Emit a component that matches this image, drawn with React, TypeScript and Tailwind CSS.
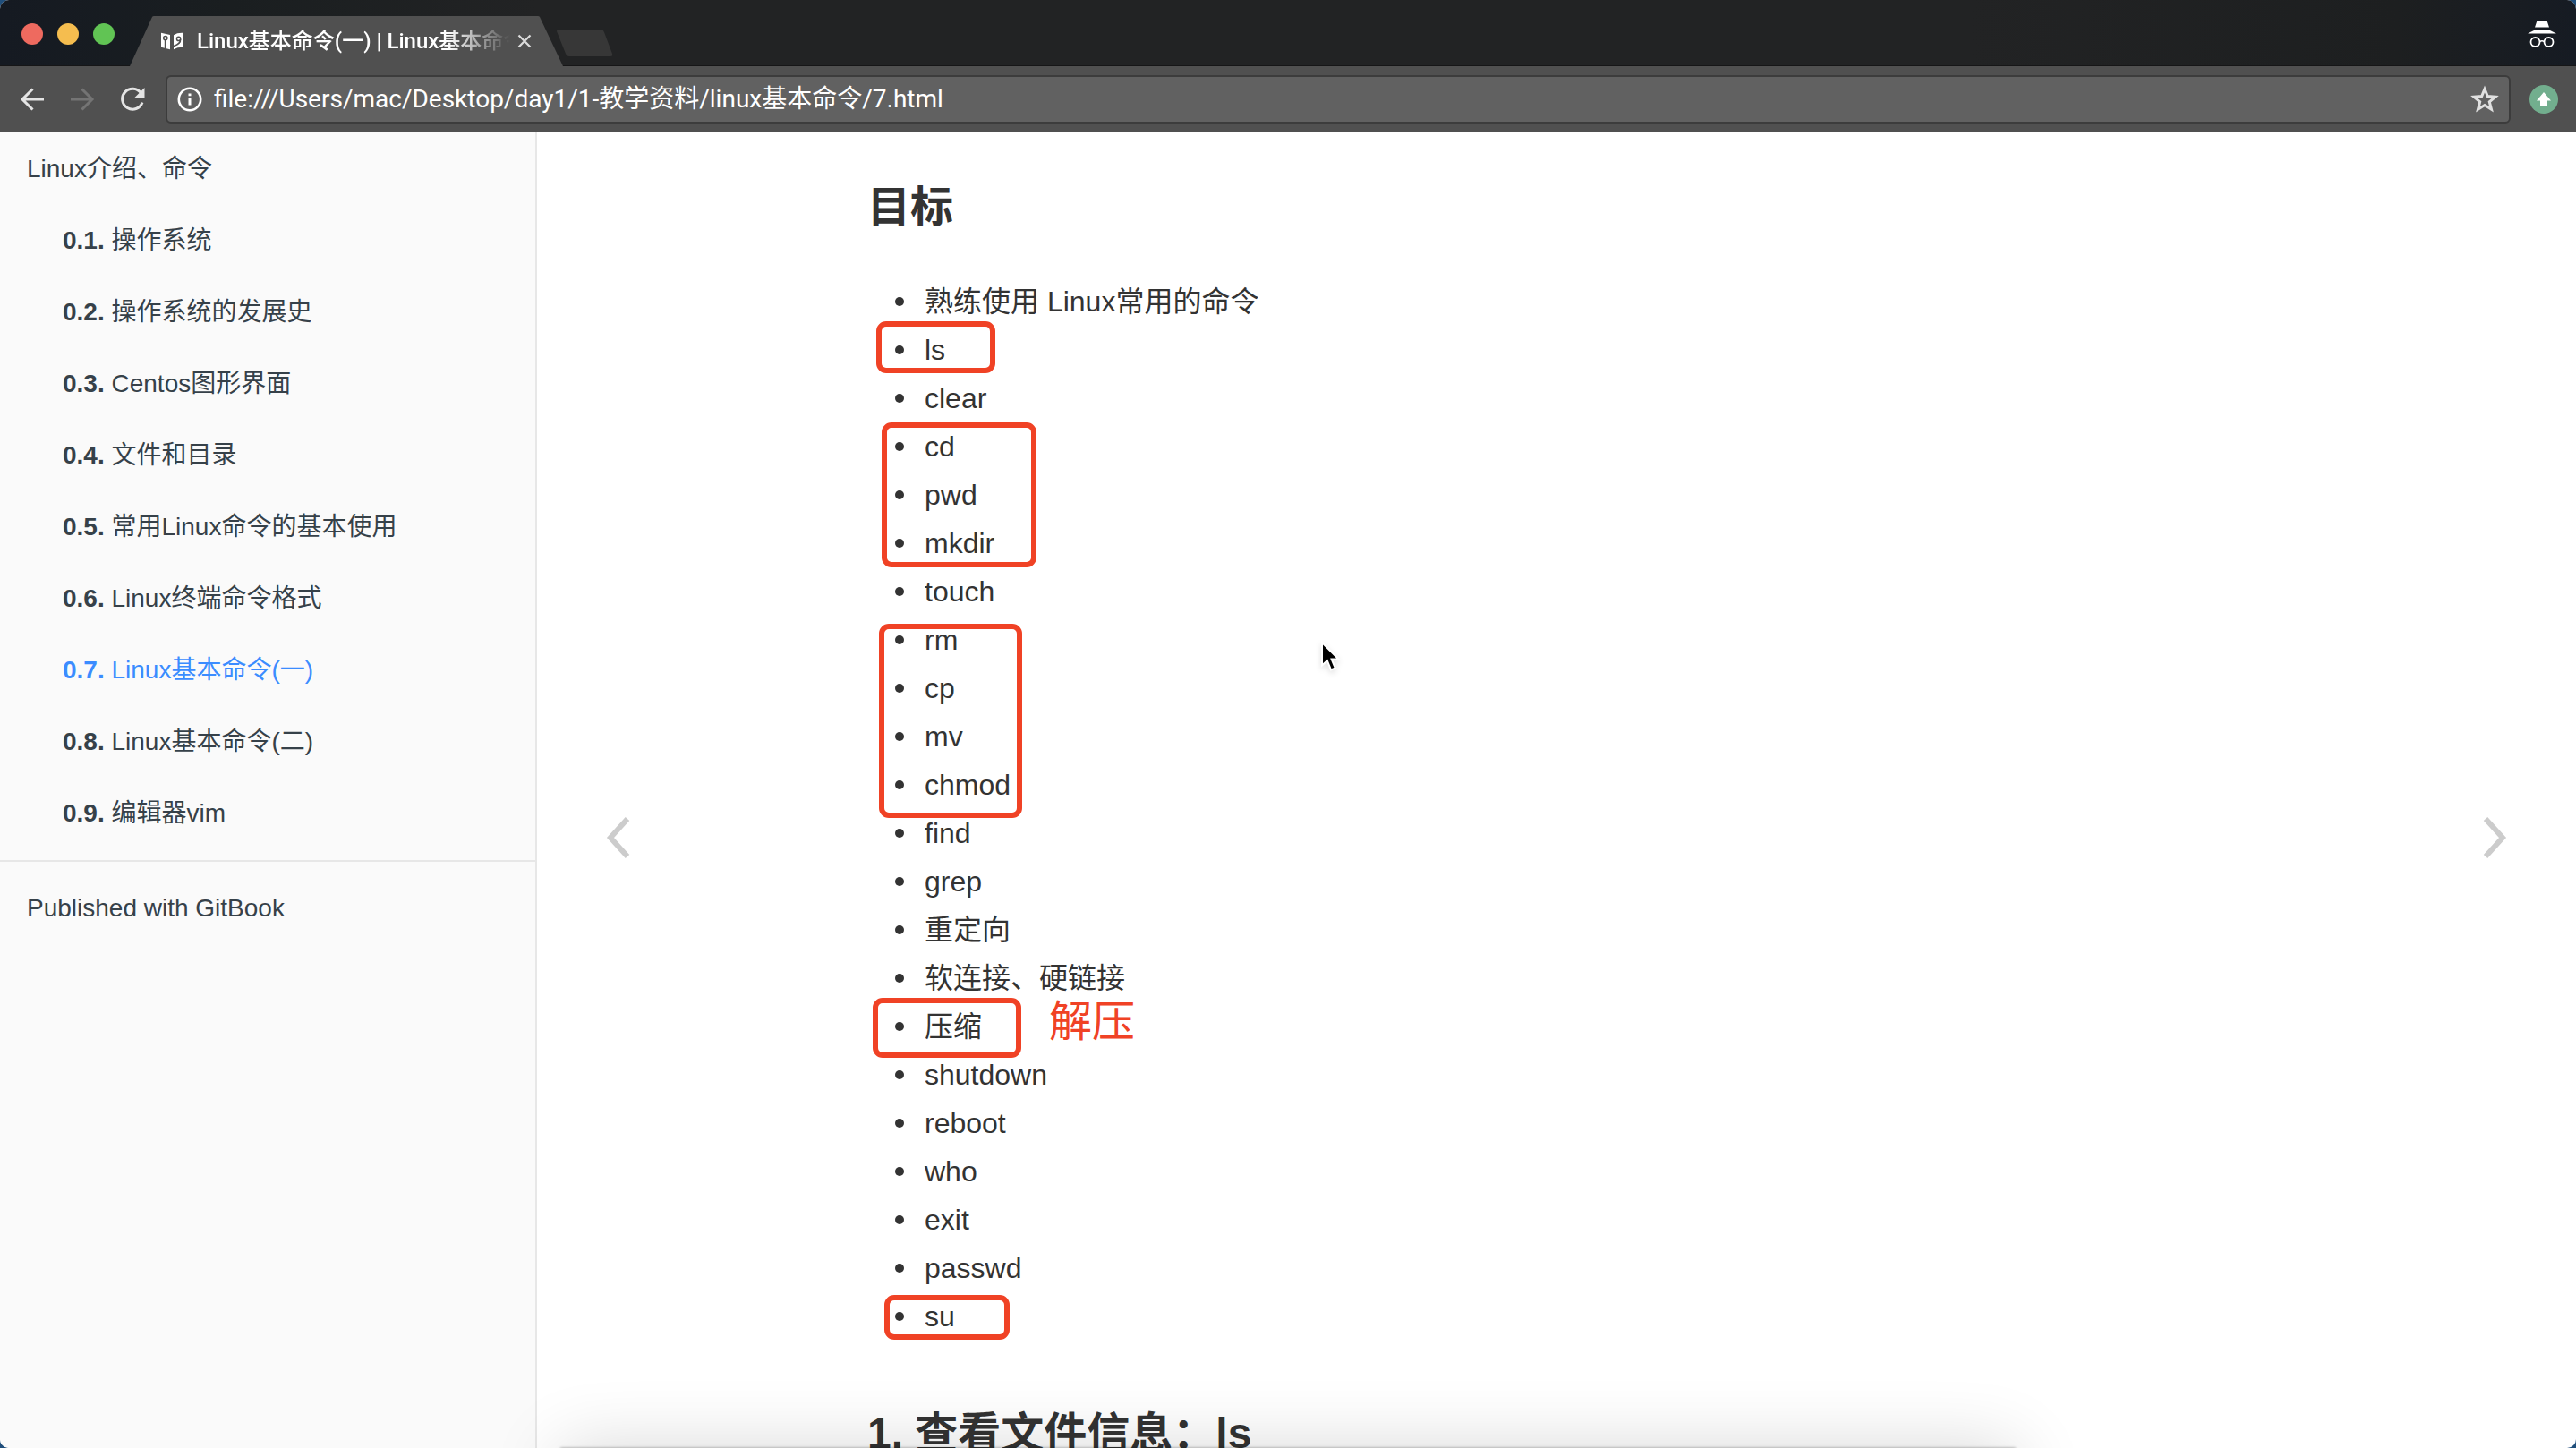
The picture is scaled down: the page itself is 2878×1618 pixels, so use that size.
import React from "react";

const chapters = [
  { number: "0.1.", title: "操作系统" },
  { number: "0.2.", title: "操作系统的发展史" },
  { number: "0.3.", title: "Centos图形界面" },
  { number: "0.4.", title: "文件和目录" },
  { number: "0.5.", title: "常用Linux命令的基本使用" },
  { number: "0.6.", title: "Linux终端命令格式" },
  { number: "0.7.", title: "Linux基本命令(一)", active: true },
  { number: "0.8.", title: "Linux基本命令(二)" },
  { number: "0.9.", title: "编辑器vim" },
];

type Goal = { text: string; box?: string; note?: string };

const goals: Goal[] = [
  { text: "熟练使用 Linux常用的命令" },
  { text: "ls", box: "-left-[54px] -top-[5px] w-[133px] h-[58px]" },
  { text: "clear" },
  { text: "cd", box: "-left-12 top-0 w-[173px] h-[162px]" },
  { text: "pwd" },
  { text: "mkdir" },
  { text: "touch" },
  { text: "rm", box: "-left-[51px] top-[9px] w-[160px] h-[217px]" },
  { text: "cp" },
  { text: "mv" },
  { text: "chmod" },
  { text: "find" },
  { text: "grep" },
  { text: "重定向" },
  { text: "软连接、硬链接" },
  { text: "压缩", box: "-left-[58px] -top-[5px] w-[166px] h-[67px]", note: "解压" },
  { text: "shutdown" },
  { text: "reboot" },
  { text: "who" },
  { text: "exit" },
  { text: "passwd" },
  { text: "su", box: "-left-[45px] top-[3px] w-[140px] h-[50px]" },
];

function BookIcon() {
  return (
    <svg className="h-5 w-[26px] shrink-0" viewBox="0 0 26 20" fill="none" aria-hidden="true">
      <path d="M1 0.8 L11 3 V19.2 L1 16.8 Z" fill="white" />
      <path d="M25 0.8 Q19 0.6 15 3.2 V19.2 Q19 16.8 25 16.8 Z" fill="white" />
      <circle cx="5.8" cy="6.6" r="2.1" stroke="#505050" strokeWidth="1.5" />
      <path d="M5.8 9 V18.6" stroke="#505050" strokeWidth="2" />
      <circle cx="20.6" cy="7.4" r="2.1" stroke="#505050" strokeWidth="1.5" />
      <path d="M22.6 8 Q23 13 15 15.5" stroke="#505050" strokeWidth="1.6" />
    </svg>
  );
}

function TitleBar() {
  return (
    <header className="flex h-[74px] shrink-0 items-end border-b border-[#161617] bg-[linear-gradient(90deg,#151a22_0,#1a1e20_260px,#222324_600px,#222324_2200px,#1d1f20_calc(100%-200px),#161b23_100%)]">
      <div className="flex h-full w-[145px] shrink-0 items-center gap-4 pt-0.5 pl-6">
        <button aria-label="Close window" className="size-6 rounded-full bg-[#ee6a5f]" />
        <button aria-label="Minimize window" className="size-6 rounded-full bg-[#f5bd4f]" />
        <button aria-label="Zoom window" className="size-6 rounded-full bg-[#61c454]" />
      </div>
      <div className="relative -mb-px flex h-14 w-[484px] shrink-0 items-center">
        <svg className="absolute inset-0 size-full" viewBox="0 0 484 56" preserveAspectRatio="none" aria-hidden="true">
          <path d="M0 56 L25 1 Q25.5 0 27 0 H456 Q457.5 0 458 1 L484 56 Z" fill="#505050" />
        </svg>
        <button className="relative flex min-w-0 flex-1 items-center gap-[15px] pl-[34px] text-left">
          <BookIcon />
          <span className="w-[350px] overflow-hidden whitespace-nowrap text-[24px] leading-8 font-medium text-white [mask-image:linear-gradient(90deg,black_280px,transparent_350px)]">
            Linux基本命令(一) | Linux基本命令
          </span>
        </button>
        <button aria-label="Close tab" className="relative mr-[35px] ml-1">
          <svg className="size-4" viewBox="0 0 16 16" stroke="#dcdcdc" strokeWidth="2.2" aria-hidden="true">
            <path d="M1.5 1.5 L14.5 14.5 M14.5 1.5 L1.5 14.5" />
          </svg>
        </button>
      </div>
      <button aria-label="New tab" className="mb-2.5 -ml-2 shrink-0">
        <svg className="h-[30px] w-16" viewBox="0 0 64 30" aria-hidden="true">
          <path d="M3 0 H51 Q53 0 54 3 L63 27 Q64 30 61 30 H15 Q12 30 11 27 L1 2 Q1 0 3 0 Z" fill="#373737" />
        </svg>
      </button>
      <div className="flex h-full flex-1 items-center justify-end pt-0.5 pr-[21px]">
        <svg className="h-8 w-[34px]" viewBox="0 0 34 32" fill="none" aria-label="Incognito" role="img">
          <path d="M11.5 1 L14 2 H20 L22.5 1 L25 8.5 H9 Z" fill="white" />
          <path d="M9 11.5 H25 L33 15.5 H1 Z" fill="white" />
          <circle cx="9.5" cy="25" r="5" stroke="white" strokeWidth="1.8" />
          <circle cx="24.5" cy="25" r="5" stroke="white" strokeWidth="1.8" />
          <path d="M14.5 24.5 Q17 23 19.5 24.5" stroke="white" strokeWidth="1.6" />
        </svg>
      </div>
    </header>
  );
}

function Toolbar() {
  return (
    <nav aria-label="Browser toolbar" className="flex h-[74px] shrink-0 items-center border-b border-[#6b6b6b] bg-[#505050]">
      <div className="flex w-[185px] shrink-0 items-center gap-7 pl-[22px]">
        <button aria-label="Back">
          <svg className="size-7" viewBox="0 0 28 28" fill="none" stroke="#e4e4e4" strokeWidth="3" aria-hidden="true">
            <path d="M27 14 H3 M14.5 2.5 L3 14 L14.5 25.5" />
          </svg>
        </button>
        <button aria-label="Forward">
          <svg className="size-7" viewBox="0 0 28 28" fill="none" stroke="#747474" strokeWidth="3" aria-hidden="true">
            <path d="M1 14 H25 M13.5 2.5 L25 14 L13.5 25.5" />
          </svg>
        </button>
        <button aria-label="Reload">
          <svg className="size-7" viewBox="0 0 28 28" fill="none" aria-hidden="true">
            <path d="M23.5 7 A11.5 11.5 0 1 0 25 17.5" stroke="#e4e4e4" strokeWidth="3" />
            <path d="M27.5 1 V12 H16.5 Z" fill="#e4e4e4" />
          </svg>
        </button>
      </div>
      <div className="flex h-[54px] flex-1 items-center rounded-md border-2 border-[#3c3c3c] bg-[#616161] pr-[11px] pl-2.5">
        <button aria-label="View site information" className="shrink-0">
          <svg className="size-[30px]" viewBox="0 0 30 30" fill="none" aria-hidden="true">
            <circle cx="15" cy="15" r="12.2" stroke="white" strokeWidth="2.6" />
            <path d="M15 13.5 V21.5 M15 8.5 V11.3" stroke="white" strokeWidth="3" />
          </svg>
        </button>
        <input
          aria-label="Address"
          className="ml-3 h-10 min-w-0 flex-1 bg-transparent text-[28px] leading-10 text-white outline-none"
          defaultValue="file:///Users/mac/Desktop/day1/1-教学资料/linux基本命令/7.html"
        />
        <button aria-label="Bookmark this page" className="shrink-0">
          <svg className="size-8" viewBox="0 0 32 32" fill="none" aria-hidden="true">
            <path d="M16 4.5 L19.3 12.6 L28 13.2 L21.3 18.8 L23.5 27.3 L16 22.6 L8.5 27.3 L10.7 18.8 L4 13.2 L12.7 12.6 Z" stroke="#e0e0e0" strokeWidth="3" />
          </svg>
        </button>
      </div>
      <button aria-label="Update extension" className="mr-5 ml-[21px] flex size-8 shrink-0 items-center justify-center rounded-full bg-[#72ae8e]">
        <svg className="size-4" viewBox="0 0 16 16" fill="white" aria-hidden="true">
          <path d="M8 0 L16 9.5 H12 V16 H4 V9.5 H0 Z" />
        </svg>
      </button>
    </nav>
  );
}

function Sidebar() {
  return (
    <aside className="w-[600px] shrink-0 border-r-2 border-[#e7e7e7] bg-[#fafafa] pt-px text-[28px] leading-10 text-[#364149]">
      <a href="#intro" className="block px-[30px] py-5">Linux介绍、命令</a>
      <ul>
        {chapters.map((c) => (
          <li key={c.number}>
            <a href="#chapter" className={c.active ? "block py-5 pr-[30px] pl-[70px] text-[#3b8cff]" : "block py-5 pr-[30px] pl-[70px]"}>
              <b>{c.number}</b> {c.title}
            </a>
          </li>
        ))}
      </ul>
      <hr className="mt-3 mb-4 border-t-2 border-[#e7e7e7]" />
      <a href="#gitbook" className="block px-[30px] py-4">Published with GitBook</a>
    </aside>
  );
}

function Chevron({ d }: { d: string }) {
  return (
    <svg className="h-12 w-7" viewBox="0 0 28 48" fill="none" stroke="#cccccc" strokeWidth="6" aria-hidden="true">
      <path d={d} />
    </svg>
  );
}

export default function App() {
  return (
    <div className="h-screen overflow-hidden bg-[#204f7c] font-[Roboto,'Noto_Sans_CJK_SC',sans-serif]">
      <div className="relative flex h-full flex-col overflow-hidden rounded-[10px] bg-white">
        <TitleBar />
        <Toolbar />
        <div className="flex min-h-0 flex-1 font-['Liberation_Sans','Noto_Sans_CJK_SC',sans-serif]">
          <Sidebar />
          <main className="relative min-w-0 flex-1 overflow-hidden text-[#333333]">
            <article className="mx-auto max-w-[1600px] px-[30px] pt-[42px]">
              <h1 className="text-[48px] leading-[84px] font-bold">目标</h1>
              <ul className="mt-9 pl-16 text-[32px] leading-[54px]">
                {goals.map((g) => (
                  <li
                    key={g.text}
                    className="relative h-[54px] before:absolute before:top-[22px] before:-left-[33px] before:size-2.5 before:rounded-full before:bg-[#333333]"
                  >
                    {g.text}
                    {g.box && <span className={`absolute rounded-[11px] border-6 border-[#f04225] ${g.box}`} />}
                    {g.note && <span className="absolute top-0 left-[139px] text-[48px] leading-11 whitespace-nowrap text-[#f04225]">{g.note}</span>}
                  </li>
                ))}
              </ul>
              <h1 className="mt-[62px] text-[48px] leading-[84px] font-bold whitespace-nowrap">1. 查看文件信息：ls</h1>
            </article>
            <a href="#prev" aria-label="Previous page" className="absolute top-1/2 left-[77px] mt-[29px]">
              <Chevron d="M24 3 L5 24 L24 45" />
            </a>
            <a href="#next" aria-label="Next page" className="absolute top-1/2 right-[77px] mt-[29px]">
              <Chevron d="M4 3 L23 24 L4 45" />
            </a>
            <svg className="absolute top-[567px] left-[874px] h-9 w-7 drop-shadow-md" viewBox="0 0 28 36" aria-hidden="true">
              <path d="M3 3 V28.5 L8.8 23.2 L13 33.5 L17.8 31.5 L13.6 21.5 H21.5 Z" fill="black" stroke="white" strokeWidth="2" />
            </svg>
          </main>
        </div>
        <div className="pointer-events-none absolute top-full right-[21.75%] left-[21.75%] h-40 shadow-[0_0_80px_rgba(0,0,0,0.16),0_0_3px_rgba(0,0,0,0.4)]" />
      </div>
    </div>
  );
}
